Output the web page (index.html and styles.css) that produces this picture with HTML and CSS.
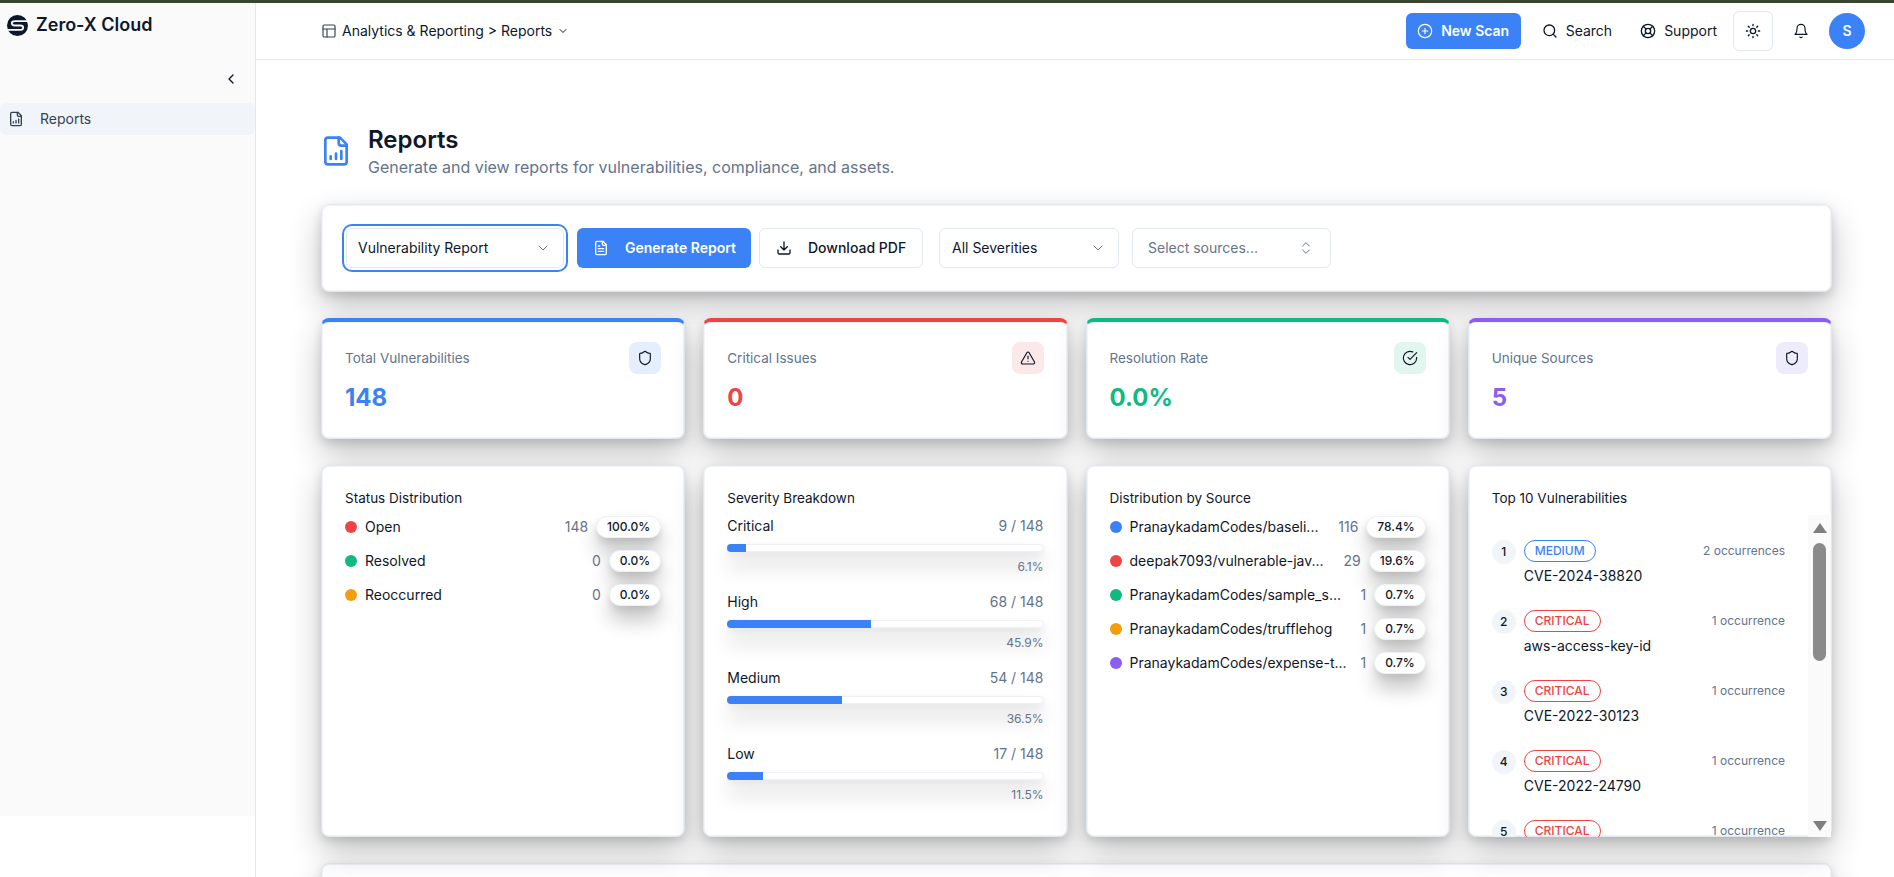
FILE: index.html
```html
<!DOCTYPE html>
<html lang="en">
<head>
<meta charset="utf-8">
<title>Reports - Zero-X Cloud</title>
<link rel="stylesheet" href="styles.css">
</head>
<body>
<svg class="sprite" aria-hidden="true">
  <symbol id="i-layout" viewBox="0 0 24 24"><rect x="3" y="3" width="18" height="18" rx="2"/><path d="M3 9h18M9 21V9"/></symbol>
  <symbol id="i-report" viewBox="0 0 24 24"><path d="M15 2H6a2 2 0 0 0-2 2v16a2 2 0 0 0 2 2h12a2 2 0 0 0 2-2V7Z"/><path d="M14 2v4a2 2 0 0 0 2 2h4"/><path d="M8 18v-2M12 18v-4M16 18v-6"/></symbol>
  <symbol id="i-file" viewBox="0 0 24 24"><path d="M15 2H6a2 2 0 0 0-2 2v16a2 2 0 0 0 2 2h12a2 2 0 0 0 2-2V7Z"/><path d="M14 2v4a2 2 0 0 0 2 2h4"/><path d="M10 9H8M16 13H8M16 17H8"/></symbol>
  <symbol id="i-chev-d" viewBox="0 0 24 24"><path d="m6 9 6 6 6-6"/></symbol>
  <symbol id="i-chev-l" viewBox="0 0 24 24"><path d="m15 18-6-6 6-6"/></symbol>
  <symbol id="i-updown" viewBox="0 0 24 24"><path d="m7 15 5 5 5-5M7 9l5-5 5 5"/></symbol>
  <symbol id="i-plus" viewBox="0 0 24 24"><circle cx="12" cy="12" r="10"/><path d="M8 12h8M12 8v8"/></symbol>
  <symbol id="i-search" viewBox="0 0 24 24"><circle cx="11" cy="11" r="8"/><path d="m21 21-4.3-4.3"/></symbol>
  <symbol id="i-buoy" viewBox="0 0 24 24"><circle cx="12" cy="12" r="10"/><circle cx="12" cy="12" r="4"/><path d="m4.93 4.93 4.24 4.24M14.83 9.17l4.24-4.24M14.83 14.83l4.24 4.24M9.17 14.83l-4.24 4.24"/></symbol>
  <symbol id="i-sun" viewBox="0 0 24 24"><circle cx="12" cy="12" r="4"/><path d="M12 2v2M12 20v2M4.93 4.93l1.41 1.41M17.66 17.66l1.41 1.41M2 12h2M20 12h2M6.34 17.66l-1.41 1.41M19.07 4.93l-1.41 1.41"/></symbol>
  <symbol id="i-bell" viewBox="0 0 24 24"><path d="M6 8a6 6 0 0 1 12 0c0 7 3 9 3 9H3s3-2 3-9"/><path d="M10.3 21a1.94 1.94 0 0 0 3.4 0"/></symbol>
  <symbol id="i-download" viewBox="0 0 24 24"><path d="M21 15v4a2 2 0 0 1-2 2H5a2 2 0 0 1-2-2v-4"/><path d="m7 10 5 5 5-5M12 15V3"/></symbol>
  <symbol id="i-shield" viewBox="0 0 24 24"><path d="M20 13c0 5-3.5 7.5-7.66 8.95a1 1 0 0 1-.67-.01C7.5 20.5 4 18 4 13V6a1 1 0 0 1 1-1c2 0 4.500-1.200 6.240-2.720a1.170 1.170 0 0 1 1.520 0C14.510 3.810 17 5 19 5a1 1 0 0 1 1 1z"/></symbol>
  <symbol id="i-alert" viewBox="0 0 24 24"><path d="m21.730 18-8-14a2 2 0 0 0-3.480 0l-8 14A2 2 0 0 0 4 21h16a2 2 0 0 0 1.730-3"/><path d="M12 9v4M12 17h.01"/></symbol>
  <symbol id="i-check" viewBox="0 0 24 24"><path d="M22 11.080V12a10 10 0 1 1-5.930-9.140"/><path d="m22 4-10 10.010-3-3"/></symbol>
</svg>

<div class="strip"></div>
<div class="app">
  <aside class="sidebar">
    <div class="side-inner">
      <div class="brand">
        <svg class="logo" viewBox="0 0 20 20"><circle cx="10" cy="10" r="10" fill="#0f172a"/><path d="M21 5.800H7.500C3.600 5.800 3.600 10 7.500 10H12.500C16.400 10 16.400 14.200 12.500 14.200H-1" fill="none" stroke="#fafafa" stroke-width="1.700"/></svg>
        <span class="brand-name">Zero-X Cloud</span>
      </div>
      <div class="collapse-row"><svg class="ico ico-16"><use href="#i-chev-l"/></svg></div>
      <div class="nav-item"><svg class="ico ico-16"><use href="#i-report"/></svg><span>Reports</span></div>
    </div>
  </aside>

  <div class="main">
    <header class="topbar">
      <div class="crumb">
        <svg class="ico ico-16"><use href="#i-layout"/></svg>
        <span>Analytics &amp; Reporting &gt; Reports</span>
        <svg class="ico ico-12"><use href="#i-chev-d"/></svg>
      </div>
      <div class="top-actions">
        <button class="new-scan"><svg class="ico ico-16"><use href="#i-plus"/></svg>New Scan</button>
        <div class="top-link"><svg class="ico ico-16"><use href="#i-search"/></svg>Search</div>
        <div class="top-link"><svg class="ico ico-16"><use href="#i-buoy"/></svg>Support</div>
        <div class="theme-btn"><svg class="ico ico-16"><use href="#i-sun"/></svg></div>
        <svg class="ico ico-16 bell"><use href="#i-bell"/></svg>
        <div class="avatar">S</div>
      </div>
    </header>

    <main class="content">
      <div class="page-head">
        <svg class="ico page-icon"><use href="#i-report"/></svg>
        <div>
          <h1>Reports</h1>
          <p>Generate and view reports for vulnerabilities, compliance, and assets.</p>
        </div>
      </div>

      <section class="card toolbar">
        <div class="field field-report">Vulnerability Report<svg class="ico ico-16 muted-ico"><use href="#i-chev-d"/></svg></div>
        <button class="btn btn-primary"><svg class="ico ico-16"><use href="#i-file"/></svg>Generate Report</button>
        <button class="btn btn-outline"><svg class="ico ico-16"><use href="#i-download"/></svg>Download PDF</button>
        <div class="field field-sev">All Severities<svg class="ico ico-16 muted-ico"><use href="#i-chev-d"/></svg></div>
        <div class="field field-src">Select sources...<svg class="ico ico-16 muted-ico"><use href="#i-updown"/></svg></div>
      </section>

      <section class="grid stats">
        <div class="card stat stat-blue">
          <div class="stat-body"><div class="stat-label">Total Vulnerabilities</div><div class="stat-value">148</div></div>
          <div class="stat-icon"><svg class="ico ico-16"><use href="#i-shield"/></svg></div>
        </div>
        <div class="card stat stat-red">
          <div class="stat-body"><div class="stat-label">Critical Issues</div><div class="stat-value">0</div></div>
          <div class="stat-icon"><svg class="ico ico-16"><use href="#i-alert"/></svg></div>
        </div>
        <div class="card stat stat-green">
          <div class="stat-body"><div class="stat-label">Resolution Rate</div><div class="stat-value">0.0%</div></div>
          <div class="stat-icon"><svg class="ico ico-16"><use href="#i-check"/></svg></div>
        </div>
        <div class="card stat stat-purple">
          <div class="stat-body"><div class="stat-label">Unique Sources</div><div class="stat-value">5</div></div>
          <div class="stat-icon"><svg class="ico ico-16"><use href="#i-shield"/></svg></div>
        </div>
      </section>

      <section class="grid charts">
        <div class="card panel">
          <h2>Status Distribution</h2>
          <div class="rows">
            <div class="row"><i class="dot bg-red"></i><span class="row-name">Open</span><span class="row-count">148</span><span class="pill">100.0%</span></div>
            <div class="row"><i class="dot bg-green"></i><span class="row-name">Resolved</span><span class="row-count">0</span><span class="pill">0.0%</span></div>
            <div class="row"><i class="dot bg-amber"></i><span class="row-name">Reoccurred</span><span class="row-count">0</span><span class="pill">0.0%</span></div>
          </div>
        </div>

        <div class="card panel">
          <h2>Severity Breakdown</h2>
          <div class="sev-list">
            <div class="sev">
              <div class="sev-top"><span>Critical</span><span class="sev-count">9 / 148</span></div>
              <div class="track"><div class="fill" style="width:6.1%"></div></div>
              <div class="sev-pct">6.1%</div>
            </div>
            <div class="sev">
              <div class="sev-top"><span>High</span><span class="sev-count">68 / 148</span></div>
              <div class="track"><div class="fill" style="width:45.9%"></div></div>
              <div class="sev-pct">45.9%</div>
            </div>
            <div class="sev">
              <div class="sev-top"><span>Medium</span><span class="sev-count">54 / 148</span></div>
              <div class="track"><div class="fill" style="width:36.5%"></div></div>
              <div class="sev-pct">36.5%</div>
            </div>
            <div class="sev">
              <div class="sev-top"><span>Low</span><span class="sev-count">17 / 148</span></div>
              <div class="track"><div class="fill" style="width:11.5%"></div></div>
              <div class="sev-pct">11.5%</div>
            </div>
          </div>
        </div>

        <div class="card panel">
          <h2>Distribution by Source</h2>
          <div class="rows">
            <div class="row"><i class="dot bg-blue"></i><span class="row-name">PranaykadamCodes/baseli...</span><span class="row-count">116</span><span class="pill">78.4%</span></div>
            <div class="row"><i class="dot bg-red"></i><span class="row-name">deepak7093/vulnerable-jav...</span><span class="row-count">29</span><span class="pill">19.6%</span></div>
            <div class="row"><i class="dot bg-green"></i><span class="row-name">PranaykadamCodes/sample_s...</span><span class="row-count">1</span><span class="pill">0.7%</span></div>
            <div class="row"><i class="dot bg-amber"></i><span class="row-name">PranaykadamCodes/trufflehog</span><span class="row-count">1</span><span class="pill">0.7%</span></div>
            <div class="row"><i class="dot bg-purple"></i><span class="row-name">PranaykadamCodes/expense-t...</span><span class="row-count">1</span><span class="pill">0.7%</span></div>
          </div>
        </div>

        <div class="card panel panel-top">
          <h2>Top 10 Vulnerabilities</h2>
          <div class="top-wrap">
            <div class="top-list">
              <div class="vuln"><span class="num">1</span><div class="vuln-main"><div class="vuln-line"><span class="badge badge-blue">MEDIUM</span><span class="occ">2 occurrences</span></div><div class="vuln-name">CVE-2024-38820</div></div></div>
              <div class="vuln"><span class="num">2</span><div class="vuln-main"><div class="vuln-line"><span class="badge badge-red">CRITICAL</span><span class="occ">1 occurrence</span></div><div class="vuln-name">aws-access-key-id</div></div></div>
              <div class="vuln"><span class="num">3</span><div class="vuln-main"><div class="vuln-line"><span class="badge badge-red">CRITICAL</span><span class="occ">1 occurrence</span></div><div class="vuln-name">CVE-2022-30123</div></div></div>
              <div class="vuln"><span class="num">4</span><div class="vuln-main"><div class="vuln-line"><span class="badge badge-red">CRITICAL</span><span class="occ">1 occurrence</span></div><div class="vuln-name">CVE-2022-24790</div></div></div>
              <div class="vuln"><span class="num">5</span><div class="vuln-main"><div class="vuln-line"><span class="badge badge-red">CRITICAL</span><span class="occ">1 occurrence</span></div></div></div>
            </div>
            <div class="scrollbar"><i class="arrow arrow-up"></i><i class="thumb"></i><i class="arrow arrow-down"></i></div>
          </div>
        </div>
      </section>

      <section class="card tail"></section>
    </main>
  </div>
</div>
</body>
</html>
```

FILE: styles.css
```css
* { box-sizing: border-box; }
html, body { margin: 0; height: 100%; }
body {
  overflow: hidden;
  background: #fff;
  color: #0f172a;
  font-family: Inter, "Noto Sans", sans-serif;
  font-size: 14px;
  line-height: 20px;
}
.sprite { display: none; }
.ico {
  fill: none;
  stroke: currentColor;
  stroke-width: 2;
  stroke-linecap: round;
  stroke-linejoin: round;
  flex: none;
  display: block;
}
.ico-16 { width: 16px; height: 16px; }
.ico-12 { width: 12px; height: 12px; }
.muted-ico { color: #64748b; stroke-width: 1.5; }

.strip { height: 3px; background: #38452f; }
.app { display: grid; grid-template-columns: 256px 1fr; height: 874px; }

.sidebar { border-right: 1px solid #e2e8f0; }
.side-inner { height: 813px; background: #fafafa; }
.brand { display: flex; align-items: center; gap: 8px; padding: 12px 0 0 7px; height: 32px; }
.logo { width: 21px; height: 21px; flex: none; }
.brand-name { font-size: 18px; font-weight: 600; line-height: 20px; }
.collapse-row { display: flex; justify-content: flex-end; padding: 36px 16px 0 0; height: 36px; box-sizing: content-box; }
.nav-item {
  display: flex;
  align-items: center;
  gap: 16px;
  height: 32px;
  margin-top: -4px;
  padding-left: 8px;
  background: #f1f5f9;
  border-radius: 6px;
  color: #334155;
}

.main { min-width: 0; }
.topbar {
  height: 57px;
  padding: 0 29px 0 65px;
  border-bottom: 1px solid #e2e8f0;
  display: flex;
  align-items: center;
  justify-content: space-between;
}
.crumb { display: flex; align-items: center; gap: 5px; }
.crumb .ico-16 { color: #334155; stroke-width: 1.75; }
.top-actions { display: flex; align-items: center; }
.new-scan {
  display: flex;
  align-items: center;
  justify-content: center;
  gap: 8px;
  width: 115px;
  height: 36px;
  border: 0;
  border-radius: 6px;
  background: #3b82f6;
  color: #fff;
  font: 600 14px/20px Inter, sans-serif;
}
.new-scan .ico { stroke-width: 1.75; }
.top-link { display: flex; align-items: center; gap: 8px; margin-left: 21px; }
.top-link + .top-link { margin-left: 28px; }
.theme-btn {
  width: 40px;
  height: 40px;
  margin-left: 16px;
  border: 1px solid #e2e8f0;
  border-radius: 6px;
  display: flex;
  align-items: center;
  justify-content: center;
}
.bell { margin-left: 20px; stroke-width: 1.75; }
.avatar {
  width: 36px;
  height: 36px;
  margin-left: 20px;
  border-radius: 50%;
  background: #3b82f6;
  color: #fff;
  font-weight: 600;
  display: flex;
  align-items: center;
  justify-content: center;
}

.content {
  padding: 63px 62px 0 65px;
  display: flex;
  flex-direction: column;
  gap: 26px;
}
.page-head { display: flex; gap: 16px; align-items: center; height: 56px; margin-bottom: -1px; }
.page-icon { width: 32px; height: 32px; margin-left: -1px; color: #3b82f6; stroke-width: 2; }
h1 { margin: 1px 0 0; font-size: 24px; line-height: 32px; font-weight: 600; }
.page-head p { margin: -1px 0 0; font-size: 16px; line-height: 24px; color: #64748b; }

.card {
  background: #fff;
  border: 1px solid #e2e8f0;
  border-radius: 8px;
  box-shadow: inset 0 0 0 1px #f0f3f7, 0 14px 32px rgba(0, 0, 0, 0.24), 0 4px 10px rgba(0, 0, 0, 0.12);
}
.toolbar {
  height: 88px;
  padding: 0 24px;
  display: flex;
  align-items: center;
  gap: 8px;
}
.field {
  height: 40px;
  border: 1px solid #e2e8f0;
  border-radius: 6px;
  padding: 0 12px;
  display: flex;
  align-items: center;
  justify-content: space-between;
  background: #fff;
}
.field-report {
  width: 218px;
  padding: 0 12px 0 11px;
  margin-right: 5px;
  box-shadow: 0 0 0 2px #fff, 0 0 0 4px #3b82f6;
}
.field-sev { width: 180px; margin-left: 8px; }
.field-src { width: 199px; margin-left: 5px; color: #64748b; padding: 0 16px 0 15px; }
.btn {
  height: 40px;
  border-radius: 6px;
  display: flex;
  align-items: center;
  white-space: nowrap;
  font: 500 14px/20px Inter, sans-serif;
  gap: 16px;
  padding: 0 0 0 16px;
}
.btn-primary { width: 174px; background: #3b82f6; color: #fff; border: 0; font-weight: 600; }
.btn-outline { width: 164px; background: #fff; color: #0f172a; border: 1px solid #e2e8f0; }

.grid { display: grid; grid-template-columns: repeat(4, 1fr); gap: 18px; }
.stat {
  height: 121px;
  padding: 20px 23px 0;
  display: flex;
  justify-content: space-between;
  align-items: flex-start;
  border-top: 4px solid;
}
.stat-blue { border-top-color: #3b82f6; }
.stat-red { border-top-color: #ef4444; }
.stat-green { border-top-color: #10b981; }
.stat-purple { border-top-color: #8b5cf6; }
.stat-label { color: #64748b; font-size: 13.5px; margin-top: 6px; }
.stat-value { font-size: 24px; line-height: 32px; font-weight: 700; margin-top: 14px; }
.stat-blue .stat-value { color: #3b82f6; }
.stat-red .stat-value { color: #ef4444; }
.stat-green .stat-value { color: #10b981; }
.stat-purple .stat-value { color: #8b5cf6; }
.stat-icon {
  width: 32px;
  height: 32px;
  border-radius: 8px;
  display: flex;
  align-items: center;
  justify-content: center;
}
.stat-icon .ico { stroke-width: 1.75; }
.stat-blue .stat-icon { background: #e5eefd; }
.stat-red .stat-icon { background: #fbe8e8; }
.stat-green .stat-icon { background: #e1f6ef; }
.stat-purple .stat-icon { background: #eeebfd; }

.panel { height: 372px; padding: 22px 23px 23px; position: relative; }
h2 { margin: 0; font-size: 13.5px; line-height: 20px; font-weight: 400; }
.rows { display: flex; flex-direction: column; gap: 12px; margin-top: 8px; }
.row { display: flex; align-items: center; height: 22px; }
.dot { width: 12px; height: 12px; border-radius: 50%; flex: none; margin-right: 8px; }
.row-name { flex: 1; white-space: nowrap; min-width: 0; }
.row-count { color: #64748b; margin-right: 8px; }
.pill {
  height: 22px;
  padding: 0 10px;
  border: 1px solid #edf1f6;
  border-radius: 11px;
  background: #fff;
  font-size: 12px;
  line-height: 20px;
  font-weight: 500;
  box-shadow: 0 14px 20px rgba(0, 0, 0, 0.24), 0 4px 6px rgba(0, 0, 0, 0.1);
}
.bg-red { background: #ef4444; }
.bg-green { background: #10b981; }
.bg-amber { background: #f59e0b; }
.bg-blue { background: #3b82f6; }
.bg-purple { background: #8b5cf6; }

.sev-list { display: flex; flex-direction: column; gap: 12px; margin-top: 8px; }
.sev { height: 64px; }
.sev-top { display: flex; justify-content: space-between; height: 20px; }
.sev-count { color: #64748b; }
.track {
  height: 8px;
  margin-top: 8px;
  border: 1px solid #edf1f6;
  border-radius: 4px;
  background: #fff;
  box-shadow: 0 14px 20px rgba(0, 0, 0, 0.18), 0 4px 6px rgba(0, 0, 0, 0.06);
}
.fill { height: 8px; margin: -1px 0 0 -1px; background: #3b82f6; border-radius: 4px 0 0 4px; }
.sev-pct { margin-top: 7px; text-align: right; color: #64748b; font-size: 12px; line-height: 16px; }

.top-wrap {
  position: absolute;
  left: 0;
  right: 0;
  top: 49px;
  bottom: -1px;
  display: flex;
}
.top-list { flex: 1; min-width: 0; padding: 25px 23px 0 23px; overflow: hidden; border-bottom-left-radius: 8px; }
.vuln { display: flex; gap: 8px; height: 70px; }
.num {
  width: 24px;
  height: 24px;
  border-radius: 50%;
  background: #f1f5f9;
  font-size: 12px;
  font-weight: 500;
  display: flex;
  align-items: center;
  justify-content: center;
  flex: none;
}
.vuln-main { flex: 1; min-width: 0; }
.vuln-line { display: flex; align-items: center; justify-content: space-between; height: 22px; }
.badge {
  height: 22px;
  padding: 0 10px;
  border: 1px solid;
  border-radius: 11px;
  font-size: 12px;
  line-height: 20px;
  font-weight: 500;
}
.badge-blue { color: #3b82f6; border-color: #3b82f6; }
.badge-red { color: #ef4444; border-color: #ef4444; }
.occ { font-size: 12px; color: #64748b; }
.vuln-name { margin-top: 4px; }
.scrollbar {
  width: 23px;
  flex: none;
  background: #fafafa;
  display: flex;
  flex-direction: column;
  align-items: center;
}
.arrow { width: 0; height: 0; border-left: 7.5px solid transparent; border-right: 7.5px solid transparent; flex: none; }
.arrow-up { border-bottom: 10px solid #7f7f7f; margin-top: 8px; }
.arrow-down { border-top: 10px solid #7f7f7f; margin-top: auto; margin-bottom: 6px; }
.thumb { width: 13px; height: 118px; margin-top: 10px; border-radius: 7px; background: #8a8a8a; flex: none; }

.tail { height: 60px; }
```
